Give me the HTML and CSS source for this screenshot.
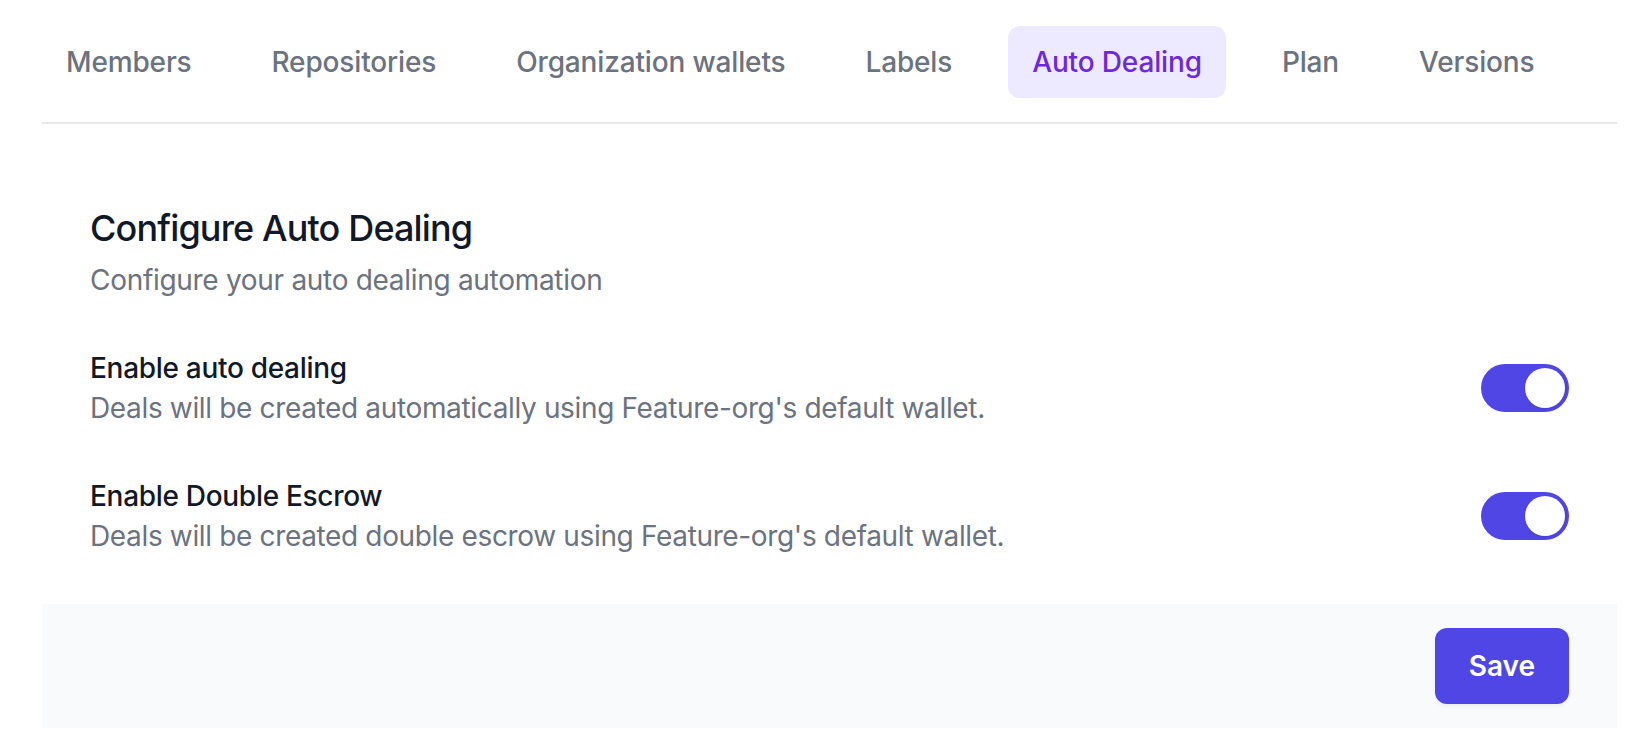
FILE: index.html
```html
<!DOCTYPE html>
<html lang="en">
<head>
<meta charset="utf-8">
<title>Auto Dealing</title>
<link rel="stylesheet" href="styles.css">
</head>
<body>
<div class="page">
  <nav class="tabs">
    <a class="tab">Members</a>
    <a class="tab">Repositories</a>
    <a class="tab">Organization wallets</a>
    <a class="tab">Labels</a>
    <a class="tab active">Auto Dealing</a>
    <a class="tab">Plan</a>
    <a class="tab">Versions</a>
  </nav>
  <section class="panel">
    <div class="content">
      <h2 class="title">Configure Auto Dealing</h2>
      <p class="subtitle">Configure your auto dealing automation</p>
      <div class="setting">
        <div class="setting-text">
          <div class="label">Enable auto dealing</div>
          <div class="desc">Deals will be created automatically using Feature-org's default wallet.</div>
        </div>
        <button class="toggle on" type="button"><span class="knob"></span></button>
      </div>
      <div class="setting">
        <div class="setting-text">
          <div class="label">Enable Double Escrow</div>
          <div class="desc">Deals will be created double escrow using Feature-org's default wallet.</div>
        </div>
        <button class="toggle on" type="button"><span class="knob"></span></button>
      </div>
    </div>
    <div class="footer">
      <button class="save" type="button">Save</button>
    </div>
  </section>
</div>
</body>
</html>
```

FILE: styles.css
```css
* { box-sizing: border-box; }
html, body { margin: 0; padding: 0; background: #ffffff; }
body {
  font-family: Inter, "Noto Sans", "Liberation Sans", sans-serif;
  color: #111827;
}
.page {
  margin-left: 42px;
  width: 1575px;
}
.tabs {
  display: flex;
  gap: 32px;
  padding: 26px 0 24px;
  border-bottom: 2px solid #e5e7eb;
}
.tab {
  display: block;
  padding: 16px 24px;
  font-size: 28px;
  line-height: 40px;
  font-weight: 500;
  letter-spacing: -0.15px;
  color: #6b7280;
  border-radius: 12px;
  text-decoration: none;
}
.tab.active {
  background: #ede9fe;
  color: #6d28d9;
}
.content {
  padding: 80px 48px 48px;
}
.title {
  margin: 0;
  font-size: 36px;
  line-height: 48px;
  font-weight: 500;
  letter-spacing: -0.85px;
  color: #111827;
}
.subtitle {
  margin: 8px 0 0;
  font-size: 28px;
  line-height: 40px;
  letter-spacing: -0.3px;
  color: #6b7280;
}
.setting {
  margin-top: 48px;
  display: flex;
  align-items: center;
  justify-content: space-between;
}
.label {
  font-size: 28px;
  line-height: 40px;
  font-weight: 500;
  letter-spacing: -0.3px;
  color: #111827;
}
.desc {
  font-size: 28px;
  line-height: 40px;
  letter-spacing: -0.35px;
  color: #6b7280;
}
.toggle {
  width: 88px;
  height: 48px;
  border: 4px solid transparent;
  border-radius: 9999px;
  background: #4f46e5;
  padding: 0;
  display: flex;
  align-items: center;
  justify-content: flex-end;
  cursor: pointer;
}
.knob {
  width: 40px;
  height: 40px;
  border-radius: 50%;
  background: #ffffff;
  box-shadow: 0 1px 3px rgba(0,0,0,0.1);
}
.footer {
  background: #f9fafb;
  padding: 24px 48px;
  display: flex;
  justify-content: flex-end;
}
.save {
  font-family: Inter, "Noto Sans", "Liberation Sans", sans-serif;
  font-size: 28px;
  line-height: 40px;
  font-weight: 600;
  color: #ffffff;
  background: #4f46e5;
  border: none;
  border-radius: 12px;
  padding: 18px 34px;
  box-shadow: 0 2px 4px rgba(0,0,0,0.06);
  cursor: pointer;
}
```
